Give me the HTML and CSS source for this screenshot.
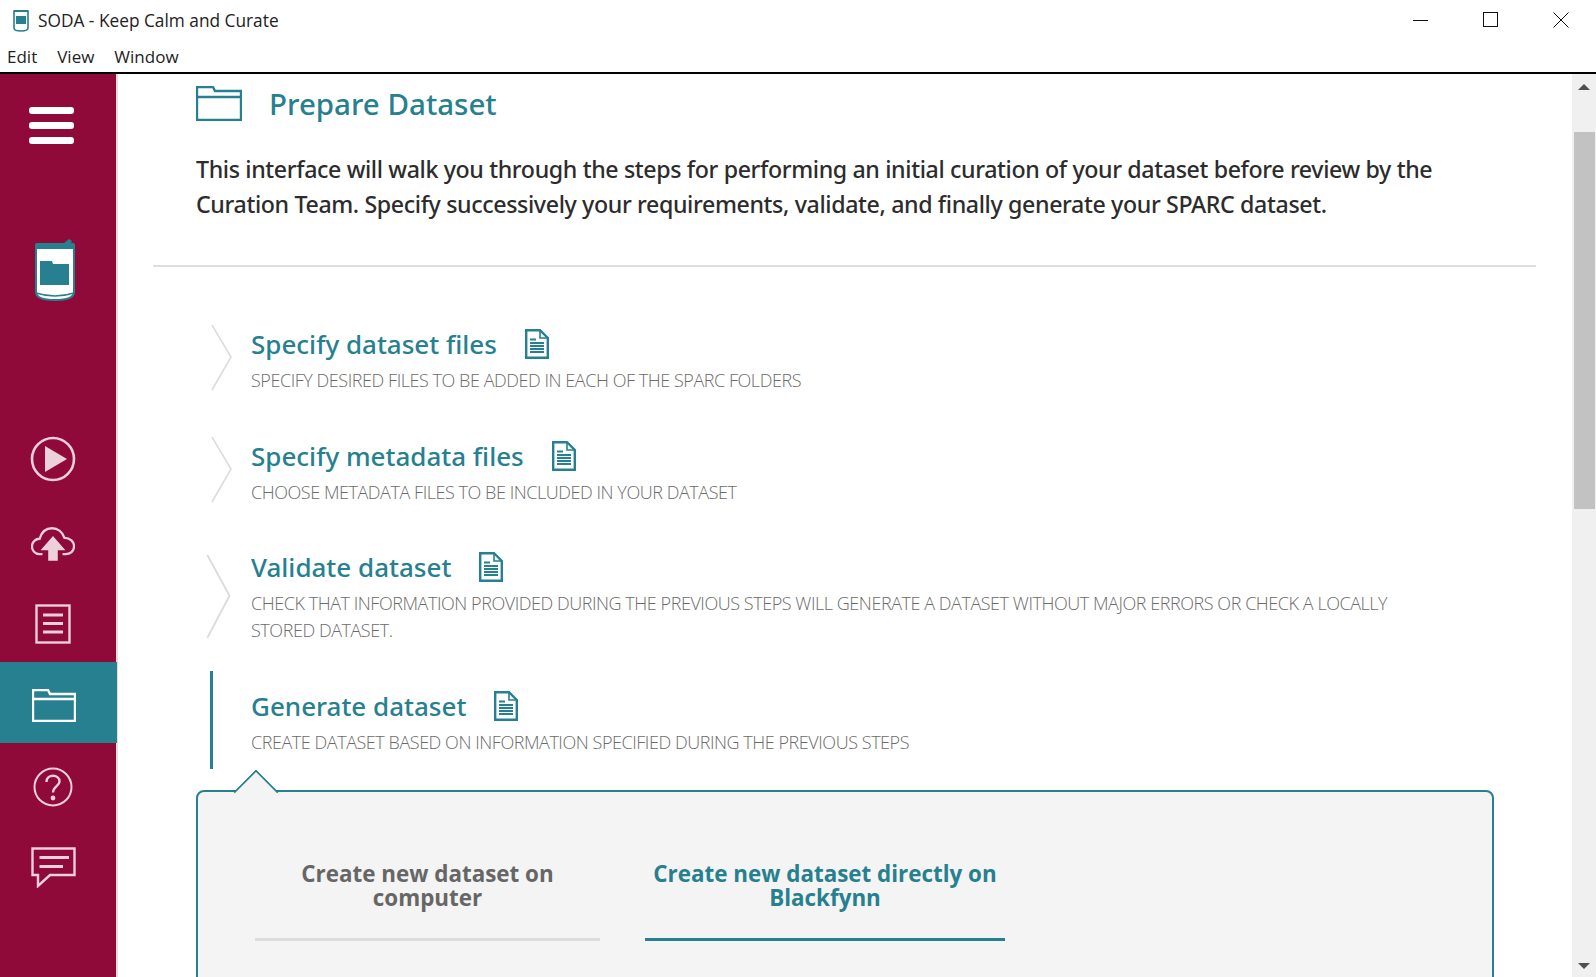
FILE: index.html

```html
<!DOCTYPE html>
<html lang="en">
<head>
  <meta charset="UTF-8">
  <title>SODA - Keep Calm and Curate</title>
  <link rel="stylesheet" href="styles.css">
</head>
<body>
  <svg class="defs" width="0" height="0">
    <symbol id="doc" viewBox="0 0 24 30">
      <path d="M1.200 1.200H15L22.800 9V28.800H1.200Z" fill="none" stroke="#26808f" stroke-width="2.400"/>
      <path d="M15 2V9H22" fill="none" stroke="#26808f" stroke-width="1.600"/>
      <path d="M5 10.500H11M5 14H19M5 17H19M5 20H19M5 23H19" stroke="#26808f" stroke-width="1.800"/>
    </symbol>
    <symbol id="chev" viewBox="0 0 24 66" preserveAspectRatio="none">
      <path d="M2 0L21 32L2 65" fill="none" stroke="#dcdcdc" stroke-width="1.600"/>
    </symbol>
  </svg>

  <header class="titlebar">
    <svg class="app-icon" width="16" height="24" viewBox="0 0 16 24">
      <path d="M1 3H15V20Q15 23 8 23T1 20Z" fill="#fff" stroke="#26808f" stroke-width="1.600"/>
      <rect x="3" y="8" width="10" height="8" fill="#26808f"/>
      <rect x="1" y="2" width="14" height="2" fill="#26808f"/>
    </svg>
    <span class="app-title">SODA - Keep Calm and Curate</span>
    <div class="win-buttons">
      <svg width="16" height="16" viewBox="0 0 16 16"><path d="M0 8.500H15" stroke="#111"/></svg>
      <svg width="16" height="16" viewBox="0 0 16 16"><rect x="0.500" y="0.500" width="14" height="14" fill="none" stroke="#111"/></svg>
      <svg width="16" height="16" viewBox="0 0 16 16"><path d="M0.500 0.500L15.500 15.500M15.500 0.500L0.500 15.500" stroke="#111"/></svg>
    </div>
  </header>
  <nav class="menubar">
    <span>Edit</span>
    <span>View</span>
    <span>Window</span>
  </nav>

  <div class="app">
    <aside class="sidebar">
      <div class="burger"><i></i><i></i><i></i></div>

      <svg class="logo" width="42" height="64" viewBox="0 0 42 64">
        <path d="M2 6H40V53Q40 61 21 61T2 53Z" fill="#fff" stroke="#26808f" stroke-width="2"/>
        <path d="M2 54Q21 60 40 54" fill="none" stroke="#26808f" stroke-width="1.500"/>
        <rect x="1" y="4" width="40" height="6" rx="2" fill="#26808f"/>
        <path d="M30 4L35 0L38 2L37 4Z" fill="#26808f"/>
        <path d="M6 22H18L19 25H35V46H6Z" fill="#26808f"/>
      </svg>

      <div class="nav-item nav-play">
        <svg width="46" height="46" viewBox="0 0 46 46">
          <circle cx="23" cy="23" r="21" fill="none" stroke="#ecd0da" stroke-width="2.600"/>
          <path d="M15 10L37 23L15 36Z" fill="#ecd0da"/>
        </svg>
      </div>
      <div class="nav-item">
        <svg width="44" height="35" viewBox="0 0 46 36">
          <path d="M12 28H9C4 28 1 24 1 20C1 15 5 12 9 12C11 5 16 1 22 1C28 1 33 5 35 11C41 11 45 15 45 20C45 25 41 28 36 28H33" fill="none" stroke="#ecd0da" stroke-width="2.400"/>
          <path d="M23 9L36 24H28V35H18V24H10Z" fill="#ecd0da"/>
        </svg>
      </div>
      <div class="nav-item nav-short">
        <svg width="36" height="40" viewBox="0 0 36 40">
          <rect x="1.500" y="1.500" width="33" height="37" fill="none" stroke="#ecd0da" stroke-width="2.400"/>
          <path d="M8 11H28M8 19.500H28M8 28H28" stroke="#ecd0da" stroke-width="3"/>
        </svg>
      </div>
      <div class="nav-item active">
        <svg width="44" height="33" viewBox="0 0 44 33">
          <path d="M1 32V1H16L18 5H43V32ZM1 10H43" fill="none" stroke="#fff" stroke-width="2.400"/>
        </svg>
      </div>
      <div class="nav-item nav-help">
        <svg width="40" height="40" viewBox="0 0 40 40">
          <circle cx="20" cy="20" r="18.500" fill="none" stroke="#ecd0da" stroke-width="2"/>
          <path d="M13.500 15C13.500 6.500 26.500 7 26.500 14.500C26.500 19 20 19.500 20 25.500" fill="none" stroke="#ecd0da" stroke-width="2.400"/>
          <circle cx="20" cy="31" r="2.400" fill="#ecd0da"/>
        </svg>
      </div>
      <div class="nav-item">
        <svg width="45" height="41" viewBox="0 0 45 41">
          <path d="M1.500 1.500H43.500V28H19L7 39V28H1.500Z" fill="none" stroke="#ecd0da" stroke-width="2.400"/>
          <path d="M8.500 10.500H38M8.500 19.500H32" stroke="#ecd0da" stroke-width="3"/>
        </svg>
      </div>
    </aside>

    <main class="content">
      <div class="head">
        <svg width="46" height="35" viewBox="0 0 46 35">
          <path d="M1 34V1H17L19 5H45V34ZM1 11H45" fill="none" stroke="#26808f" stroke-width="2.400"/>
        </svg>
        <h1>Prepare Dataset</h1>
      </div>
      <p class="intro">This interface will walk you through the steps for performing an initial curation of your dataset before review by the Curation Team. Specify successively your requirements, validate, and finally generate your SPARC dataset.</p>
      <hr class="rule">

      <section class="step">
        <svg class="marker"><use href="#chev"/></svg>
        <div>
          <h2>Specify dataset files <svg class="doc"><use href="#doc"/></svg></h2>
          <p>SPECIFY DESIRED FILES TO BE ADDED IN EACH OF THE SPARC FOLDERS</p>
        </div>
      </section>
      <section class="step">
        <svg class="marker"><use href="#chev"/></svg>
        <div>
          <h2>Specify metadata files <svg class="doc"><use href="#doc"/></svg></h2>
          <p>CHOOSE METADATA FILES TO BE INCLUDED IN YOUR DATASET</p>
        </div>
      </section>
      <section class="step step-tall">
        <svg class="marker"><use href="#chev"/></svg>
        <div>
          <h2>Validate dataset <svg class="doc"><use href="#doc"/></svg></h2>
          <p>CHECK THAT INFORMATION PROVIDED DURING THE PREVIOUS STEPS WILL GENERATE A DATASET WITHOUT MAJOR ERRORS OR CHECK A LOCALLY STORED DATASET.</p>
        </div>
      </section>
      <section class="step step-current">
        <div class="marker-bar"></div>
        <div>
          <h2>Generate dataset <svg class="doc"><use href="#doc"/></svg></h2>
          <p>CREATE DATASET BASED ON INFORMATION SPECIFIED DURING THE PREVIOUS STEPS</p>
        </div>
      </section>

      <div class="panel">
        <div class="tabs">
          <div class="tab">Create new dataset on computer</div>
          <div class="tab tab-on">Create new dataset directly on Blackfynn</div>
        </div>
      </div>
    </main>

    <div class="scrollbar">
      <span class="arrow-up"></span>
      <div class="track"><div class="thumb"></div></div>
      <span class="arrow-down"></span>
    </div>
  </div>
</body>
</html>
```

FILE: styles.css

```css
html, body {
  margin: 0;
  height: 977px;
  overflow: hidden;
  background: #fff;
  font-family: "Open Sans", "Noto Sans", sans-serif;
  color: #222;
}
.defs {
  position: absolute;
}
.titlebar {
  height: 40px;
  display: flex;
  align-items: center;
  padding-left: 13px;
}
.app-title {
  margin-left: 9px;
  font-size: 17.300px;
}
.win-buttons {
  margin-left: auto;
  display: flex;
  gap: 54px;
  padding-right: 27px;
}
.menubar {
  height: 32px;
  display: flex;
  align-items: center;
  gap: 20px;
  padding-left: 7px;
  font-size: 17px;
  border-bottom: 2px solid #000;
}
.app {
  display: flex;
  height: 903px;
}

.sidebar {
  width: 116px;
  flex: none;
  background: #8f0a38;
  border-right: 2px solid #dedede;
  display: flex;
  flex-direction: column;
  align-items: center;
}
.burger {
  margin-top: 33px;
  margin-right: 14px;
  display: flex;
  flex-direction: column;
  gap: 8px;
}
.burger i {
  display: block;
  width: 45px;
  height: 7px;
  border-radius: 3px;
  background: #fff;
}
.logo {
  margin-top: 95px;
  margin-left: -6px;
}
.nav-item {
  width: 117px;
  height: 81px;
  flex: none;
  display: flex;
  align-items: center;
  justify-content: center;
  padding-right: 10px;
  box-sizing: border-box;
}
.nav-play {
  margin-top: 115px;
  margin-bottom: 5px;
}
.nav-short {
  height: 77px;
}
.nav-help {
  margin-top: 3px;
}
.active {
  background: #26808f;
  margin-right: -1px;
}
.active svg {
  margin-top: 6px;
}

.content {
  flex: 1;
  min-width: 0;
  padding: 0 36px 0 33px;
  overflow: hidden;
}
.head {
  display: flex;
  align-items: center;
  gap: 27px;
  margin: 9px 0 0 45px;
  height: 40px;
}
.head svg {
  margin-top: 1px;
}
h1 {
  margin: 0;
  font-family: "Noto Sans", sans-serif;
  font-size: 29.500px;
  font-weight: 500;
  color: #26808f;
}
.intro {
  margin: 29px 0 0 45px;
  width: 1260px;
  font-family: "Noto Sans", sans-serif;
  font-size: 23.200px;
  line-height: 35px;
  font-weight: 500;
  letter-spacing: -0.37px;
  color: #2c2c2c;
}
.rule {
  margin: 43px 0 0 2px;
  border: 0;
  border-top: 2px solid #dedede;
}

.step {
  display: flex;
  margin-left: 57px;
  height: 112px;
}
.step:first-of-type {
  margin-top: 57px;
}
.marker {
  width: 24px;
  height: 66px;
  flex: none;
  margin: 1px 17px 0 2px;
}
.step-tall {
  height: 124px;
  margin-top: -1px;
}
.step-tall .marker {
  width: 28px;
  height: 84px;
  margin: 8px 18px 0 -3px;
}
.step-current {
  height: 98px;
}
.marker-bar {
  width: 3px;
  height: 98px;
  background: #26808f;
  margin: 0 38px 0 2px;
}
.step-current h2 {
  margin-top: 15px;
}
h2 {
  margin: 0;
  display: flex;
  align-items: center;
  gap: 28px;
  font-family: "Noto Sans", sans-serif;
  font-size: 26px;
  line-height: 40px;
  font-weight: 500;
  color: #26808f;
}
.doc {
  width: 24px;
  height: 30px;
}
.step p {
  margin: 3px 0 0;
  width: 1190px;
  font-size: 18px;
  line-height: 27px;
  font-weight: 300;
  color: #6b6b6b;
  letter-spacing: -0.45px;
}

.panel {
  position: relative;
  margin: 21px 0 0 45px;
  width: 1298px;
  height: 300px;
  box-sizing: border-box;
  background: #f4f4f4;
  border: 2px solid #26808f;
  border-radius: 8px;
}
.panel::before {
  content: "";
  position: absolute;
  left: 42px;
  top: -16px;
  width: 30px;
  height: 30px;
  background: #f4f4f4;
  border-left: 2px solid #26808f;
  border-top: 2px solid #26808f;
  border-top-left-radius: 2px;
  transform: rotate(45deg);
}
.tabs {
  display: flex;
  gap: 45px;
  margin: 70px 0 0 57px;
}
.tab {
  width: 345px;
  padding-bottom: 28px;
  border-bottom: 3px solid #dcdcdc;
  text-align: center;
  font-size: 22.400px;
  line-height: 24px;
  font-weight: 700;
  color: #666;
}
.tab-on {
  width: 360px;
  color: #26808f;
  border-bottom-color: #26808f;
}

.scrollbar {
  width: 24px;
  flex: none;
  background: #f0f0f0;
  display: flex;
  flex-direction: column;
  align-items: center;
}
.track {
  flex: 1;
  width: 100%;
}
.thumb {
  margin-top: 42px;
  height: 377px;
  width: 21px;
  margin-left: 2px;
  background: #c2c2c2;
}
.arrow-up, .arrow-down {
  width: 0;
  height: 0;
  border-left: 6px solid transparent;
  border-right: 6px solid transparent;
}
.arrow-up {
  margin-top: 10px;
  border-bottom: 6px solid #505050;
}
.arrow-down {
  margin-bottom: 8px;
  border-top: 6px solid #505050;
}
```
